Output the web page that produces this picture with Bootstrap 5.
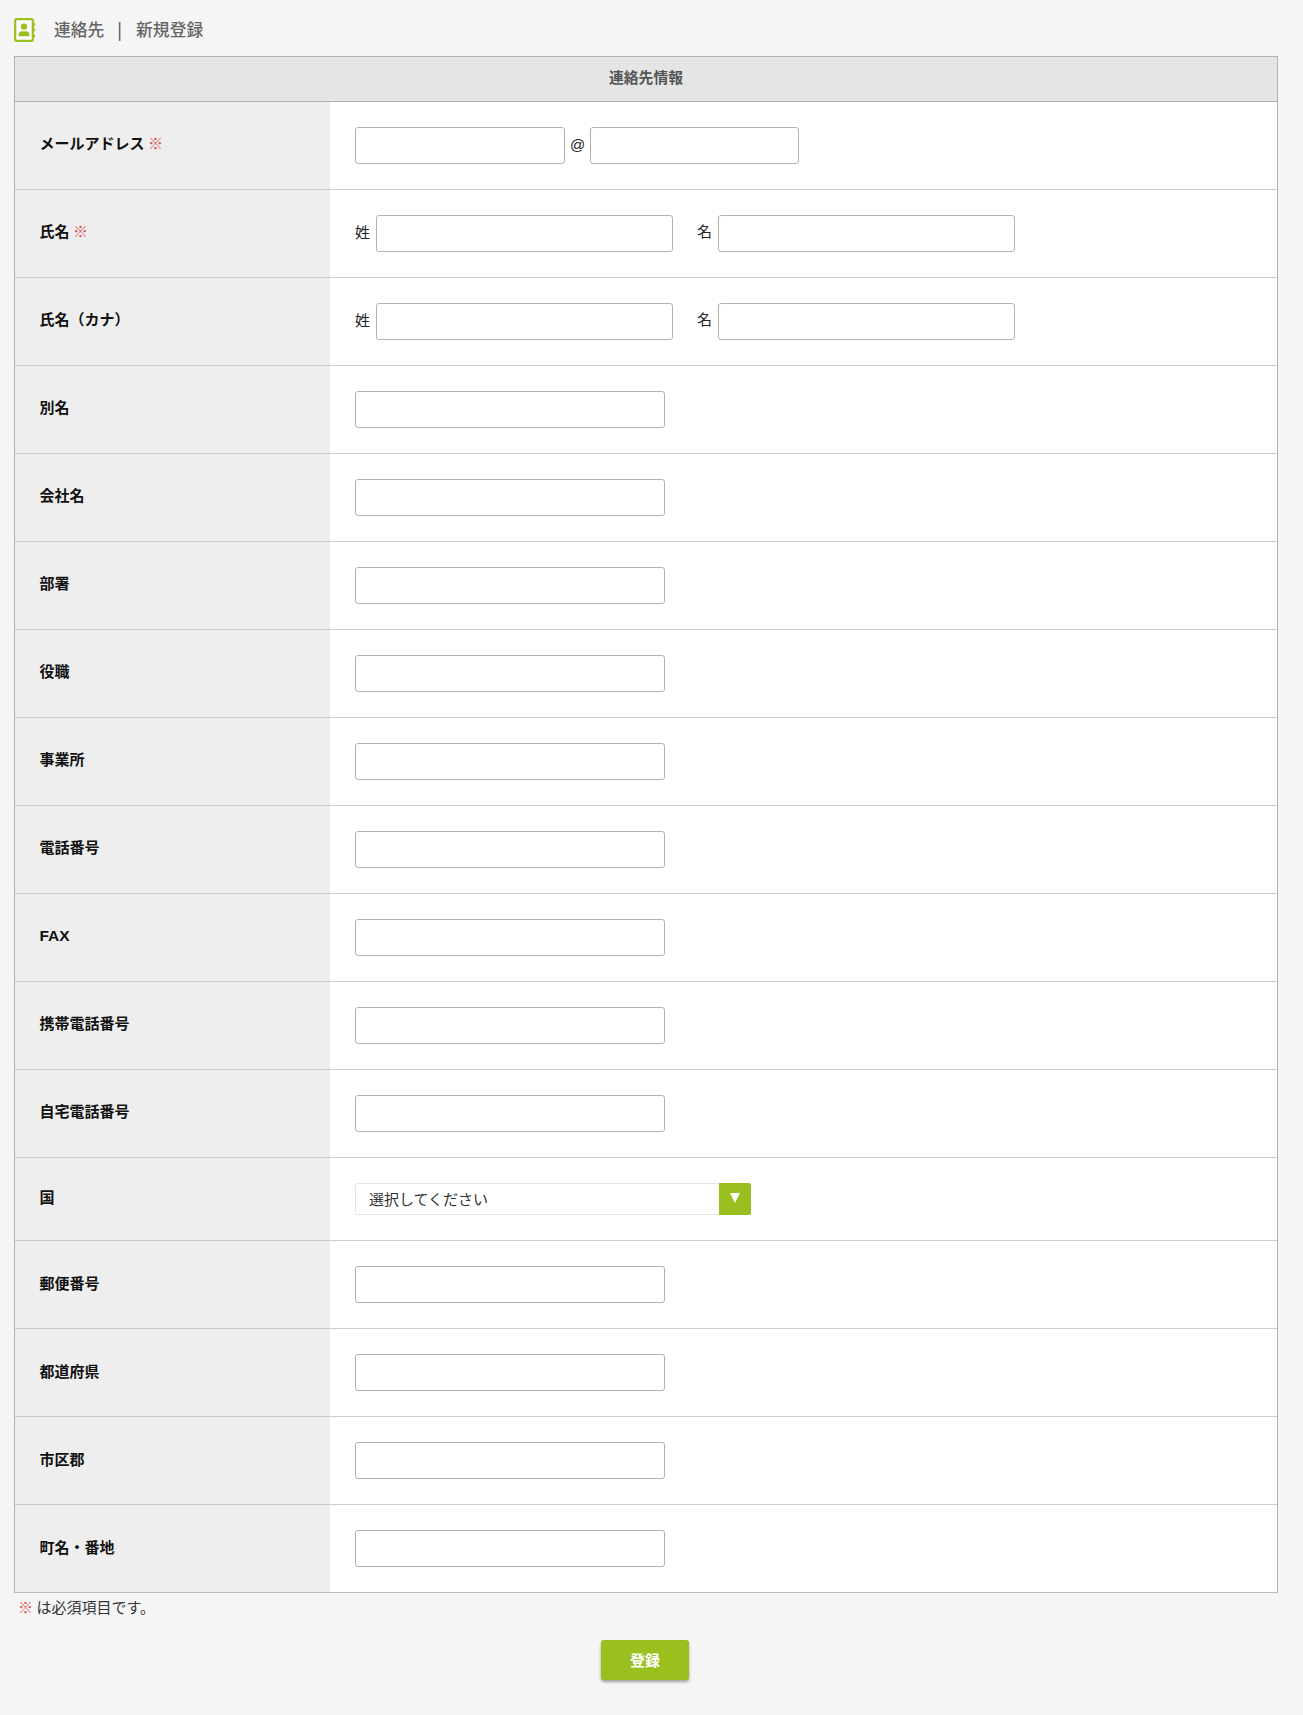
<!DOCTYPE html>
<html lang="ja">
<head>
<meta charset="utf-8">
<title>連絡先 | 新規登録</title>
<link rel="stylesheet" href="https://cdn.jsdelivr.net/npm/bootstrap@5.3.0/dist/css/bootstrap.min.css">
<style>
html,body{background:#f5f5f5;}
body{font-family:"Noto Sans CJK JP","Liberation Sans",sans-serif;font-size:15px;color:#222;min-height:1715px;}
.page-wrap{padding:0 25px 0 14px;}
.title-bar{height:56px;padding-top:18px;color:#666;font-size:16.8px;font-weight:500;line-height:22px;}
.title-bar svg{width:22px;height:24px;display:block;}
.title-text{margin-left:18px;}
.title-sep{margin:0 14px 0 13px;color:#556;}
.form-box{border:1px solid #b3b3b3;border-bottom:0;background:#fff;}
.box-head{height:45px;background:#e5e5e5;border-bottom:1px solid #b3b3b3;color:#555;font-weight:700;font-size:14.8px;padding-bottom:4px;}
.form-line{height:88px;border-bottom:1px solid #ccc;}
.form-line.short-line{height:83px;}
.form-line:last-child{border-bottom:1px solid #bbb;}
.line-label{width:315px;flex:none;background:#eee;padding:0 0 5px 24.5px;font-weight:700;font-size:15px;color:#111;align-self:stretch;}
.short-line .line-label,.short-line ~ .form-line .line-label{padding-bottom:3px;}
.line-body{padding-left:25px;font-size:15px;color:#222;}
.req{color:#d9534f;font-weight:400;}
.line-label.latin-bold{font-family:"Liberation Sans",sans-serif;font-size:15.5px;padding-bottom:4px;}
.form-control.fld{height:37px;border:1px solid #b3b3b3;border-radius:3px;padding:0 8px;background:#fff;box-shadow:none;}
.fld-wide{width:310px;}
.fld-mail1{width:210px;}
.fld-mail2{width:209px;}
.fld-name{width:297px;}
.at-sign{width:25px;text-align:center;font-family:"Liberation Sans",sans-serif;}
.name-lab{width:21px;padding-bottom:2px;}
.name-lab2{width:21px;margin-left:24px;padding-bottom:4px;}
.sel-wrap{width:396px;height:32px;border:1px solid #e6e6e6;border-radius:2px;background:#fff;}
.form-select.sel-plain{flex:1;border:0;background:transparent;height:30px;padding:0 0 0 13px;color:#333;font-size:15px;appearance:none;box-shadow:none;border-radius:0;}
.sel-arrow{width:32px;background:#9bbf1f;align-self:stretch;margin:-1px -1px -1px 0;border-radius:0 2px 2px 0;}
.sel-arrow i{display:block;width:0;height:0;border-left:5px solid transparent;border-right:5px solid transparent;border-top:10px solid #fff;margin-top:-2px;}
.note-line{font-size:15px;line-height:20px;padding:4px 0 0 4px;color:#333;}
.btn.save-btn{width:88px;height:40px;margin-top:23px;margin-left:-2px;background:#9bbf1f;border:0;border-radius:3px;color:#fff;font-weight:700;font-size:15px;padding:0;box-shadow:0 2px 3px rgba(0,0,0,.35);}
</style>
</head>
<body>
<div class="page-wrap">
  <div class="title-bar d-flex align-items-start">
    <svg viewBox="0 0 22 24" aria-hidden="true">
      <rect x="1.2" y="1.2" width="17.6" height="21.6" rx="1.5" fill="#fff" stroke="#9bbf1f" stroke-width="2.2"/>
      <rect x="18" y="5" width="3.2" height="2.4" fill="#9bbf1f"/>
      <rect x="18" y="10.8" width="3.2" height="2.4" fill="#9bbf1f"/>
      <rect x="18" y="16.6" width="3.2" height="2.4" fill="#9bbf1f"/>
      <circle cx="10" cy="8.6" r="3.2" fill="#9bbf1f"/>
      <path d="M4.6 18.2v-2c0-2 1.6-3 3.2-3h4.4c1.6 0 3.2 1 3.2 3v2z" fill="#9bbf1f"/>
    </svg>
    <div class="title-text"><span>連絡先</span><span class="title-sep">|</span><span>新規登録</span></div>
  </div>

  <div class="form-box">
    <div class="box-head d-flex align-items-center justify-content-center">連絡先情報</div>

    <div class="form-line d-flex align-items-center">
      <div class="line-label d-flex align-items-center"><span>メールアドレス <span class="req">※</span></span></div>
      <div class="line-body d-flex align-items-center">
        <input class="form-control fld fld-mail1" type="text" aria-label="メール">
        <span class="at-sign">@</span>
        <input class="form-control fld fld-mail2" type="text" aria-label="ドメイン">
      </div>
    </div>

    <div class="form-line d-flex align-items-center">
      <div class="line-label d-flex align-items-center"><span>氏名 <span class="req">※</span></span></div>
      <div class="line-body d-flex align-items-center">
        <span class="name-lab">姓</span><input class="form-control fld fld-name" type="text" aria-label="姓">
        <span class="name-lab2">名</span><input class="form-control fld fld-name" type="text" aria-label="名">
      </div>
    </div>

    <div class="form-line d-flex align-items-center">
      <div class="line-label d-flex align-items-center"><span>氏名（カナ）</span></div>
      <div class="line-body d-flex align-items-center">
        <span class="name-lab">姓</span><input class="form-control fld fld-name" type="text" aria-label="姓">
        <span class="name-lab2">名</span><input class="form-control fld fld-name" type="text" aria-label="名">
      </div>
    </div>

    <div class="form-line d-flex align-items-center"><div class="line-label d-flex align-items-center">別名</div><div class="line-body"><input class="form-control fld fld-wide" type="text" aria-label="別名"></div></div>
    <div class="form-line d-flex align-items-center"><div class="line-label d-flex align-items-center">会社名</div><div class="line-body"><input class="form-control fld fld-wide" type="text" aria-label="会社名"></div></div>
    <div class="form-line d-flex align-items-center"><div class="line-label d-flex align-items-center">部署</div><div class="line-body"><input class="form-control fld fld-wide" type="text" aria-label="部署"></div></div>
    <div class="form-line d-flex align-items-center"><div class="line-label d-flex align-items-center">役職</div><div class="line-body"><input class="form-control fld fld-wide" type="text" aria-label="役職"></div></div>
    <div class="form-line d-flex align-items-center"><div class="line-label d-flex align-items-center">事業所</div><div class="line-body"><input class="form-control fld fld-wide" type="text" aria-label="事業所"></div></div>
    <div class="form-line d-flex align-items-center"><div class="line-label d-flex align-items-center">電話番号</div><div class="line-body"><input class="form-control fld fld-wide" type="text" aria-label="電話番号"></div></div>
    <div class="form-line d-flex align-items-center"><div class="line-label latin-bold d-flex align-items-center">FAX</div><div class="line-body"><input class="form-control fld fld-wide" type="text" aria-label="FAX"></div></div>
    <div class="form-line d-flex align-items-center"><div class="line-label d-flex align-items-center">携帯電話番号</div><div class="line-body"><input class="form-control fld fld-wide" type="text" aria-label="携帯電話番号"></div></div>
    <div class="form-line d-flex align-items-center"><div class="line-label d-flex align-items-center">自宅電話番号</div><div class="line-body"><input class="form-control fld fld-wide" type="text" aria-label="自宅電話番号"></div></div>

    <div class="form-line short-line d-flex align-items-center">
      <div class="line-label d-flex align-items-center">国</div>
      <div class="line-body">
        <div class="sel-wrap d-flex align-items-center">
          <select class="form-select sel-plain" aria-label="国"><option>選択してください</option></select>
          <span class="sel-arrow d-flex align-items-center justify-content-center"><i></i></span>
        </div>
      </div>
    </div>

    <div class="form-line d-flex align-items-center"><div class="line-label d-flex align-items-center">郵便番号</div><div class="line-body"><input class="form-control fld fld-wide" type="text" aria-label="郵便番号"></div></div>
    <div class="form-line d-flex align-items-center"><div class="line-label d-flex align-items-center">都道府県</div><div class="line-body"><input class="form-control fld fld-wide" type="text" aria-label="都道府県"></div></div>
    <div class="form-line d-flex align-items-center"><div class="line-label d-flex align-items-center">市区郡</div><div class="line-body"><input class="form-control fld fld-wide" type="text" aria-label="市区郡"></div></div>
    <div class="form-line d-flex align-items-center"><div class="line-label d-flex align-items-center">町名・番地</div><div class="line-body"><input class="form-control fld fld-wide" type="text" aria-label="町名・番地"></div></div>
  </div>

  <div class="note-line"><span class="req">※</span> は必須項目です。</div>
  <div class="text-center"><button type="button" class="btn save-btn">登録</button></div>
</div>
<script src="https://cdn.jsdelivr.net/npm/bootstrap@5.3.0/dist/js/bootstrap.bundle.min.js"></script>
</body>
</html>
